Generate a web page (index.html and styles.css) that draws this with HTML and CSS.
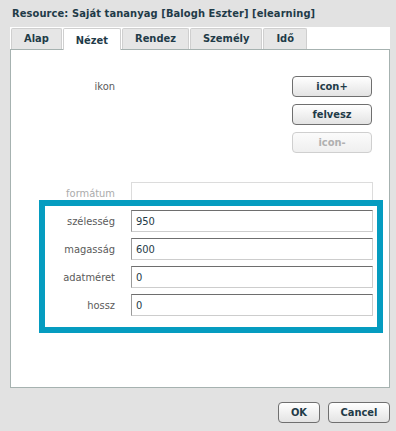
FILE: index.html
```html
<!DOCTYPE html>
<html lang="hu">
<head>
  <meta charset="utf-8">
  <title>Resource</title>
  <link rel="stylesheet" href="styles.css">
</head>
<body>
  <div class="dialog">
    <div class="dialog__title">Resource: Saját tananyag [Balogh Eszter] [elearning]</div>

    <ul class="tabs">
      <li class="tabs__item">Alap</li>
      <li class="tabs__item tabs__item--active">Nézet</li>
      <li class="tabs__item">Rendez</li>
      <li class="tabs__item">Személy</li>
      <li class="tabs__item">Idő</li>
    </ul>

    <div class="panel">
      <div class="row row--top">
        <span class="row__label">ikon</span>
        <div class="row__buttons">
          <button class="btn btn--wide">icon+</button>
          <button class="btn btn--wide">felvesz</button>
          <button class="btn btn--wide" disabled>icon-</button>
        </div>
      </div>

      <div class="row row--disabled">
        <span class="row__label">formátum</span>
        <input class="field" type="text" disabled>
      </div>
      <div class="row">
        <span class="row__label">szélesség</span>
        <input class="field" type="text" value="950">
      </div>
      <div class="row">
        <span class="row__label">magasság</span>
        <input class="field" type="text" value="600">
      </div>
      <div class="row">
        <span class="row__label">adatméret</span>
        <input class="field" type="text" value="0">
      </div>
      <div class="row">
        <span class="row__label">hossz</span>
        <input class="field" type="text" value="0">
      </div>

      <!-- kiemelés a képernyőképen -->
      <div class="highlight"></div>
    </div>

    <div class="dialog__footer">
      <button class="btn btn--ok">OK</button>
      <button class="btn btn--cancel">Cancel</button>
    </div>
  </div>
</body>
</html>
```

FILE: styles.css
```css
*, *::before, *::after {
  box-sizing: border-box;
}

html {
  font-size: 11px;
}

body {
  margin: 0;
  background-color: #e2e2e2;
  font-family: "DejaVu Sans Condensed", "DejaVu Sans", sans-serif;
  color: #1f3b48;
}

ul, li {
  list-style: none;
  margin: 0;
  padding: 0;
}

.dialog {
  padding: 7px 6px 0 10px;
}

.dialog__title {
  height: 14px;
  line-height: 14px;
  padding-left: 2px;
  font-weight: bold;
  font-size: 11px;
  letter-spacing: 0.1px;
}

.tabs {
  display: flex;
  align-items: flex-end;
  height: 22px;
  margin-top: 6px;
  padding-left: 1px;
  gap: 1px;
  background: #ffffff;
}

.tabs__item {
  height: 21px;
  padding: 0 12px;
  line-height: 19px;
  border: 1px solid #cfcfcf;
  border-bottom: none;
  border-radius: 2px 2px 0 0;
  background: #e6e6e6;
  font-weight: bold;
}

.tabs__item--active {
  position: relative;
  z-index: 1;
  height: 22px;
  margin-bottom: -1px;
  line-height: 23px;
  background: #ffffff;
}

.panel {
  position: relative;
  display: flex;
  flex-direction: column;
  gap: 6px;
  height: 339px;
  padding: 26px 16px 0 0;
  border: 1px solid #a6b2b0;
  background: #ffffff;
}

.row {
  display: grid;
  grid-template-columns: 104px 1fr;
  align-items: center;
  column-gap: 16px;
}

.row--top {
  align-items: start;
  margin-bottom: 23px;
}

.row--top .row__label {
  padding-top: 4px;
}

.row__label {
  text-align: right;
  color: #5a5a5a;
}

.row--disabled .row__label {
  color: #ababab;
}

.row__buttons {
  display: flex;
  flex-direction: column;
  align-items: flex-end;
  gap: 7px;
  padding-right: 1px;
}

.field {
  height: 22px;
  padding: 0 4px;
  border: 1px solid #cdcdcd;
  border-top-color: #6e6e6e;
  border-left-color: #9a9a9a;
  font-family: inherit;
  font-size: 11px;
  color: #1f3b48;
}

.field:disabled {
  border-color: #dcdcdc;
  background: #ffffff;
}

.btn {
  height: 21px;
  padding: 0 8px;
  border: 1px solid #6f6f6f;
  border-radius: 4px;
  background: linear-gradient(#ffffff, #e3e3e3);
  font-family: inherit;
  font-size: 11px;
  font-weight: bold;
  color: #1f3b48;
}

.btn:disabled {
  border-color: #cfcfcf;
  background: linear-gradient(#fbfbfb, #efefef);
  color: #b0b0b0;
}

.btn--wide {
  width: 80px;
}

.btn--ok {
  width: 42px;
}

.btn--cancel {
  width: 62px;
}

.highlight {
  position: absolute;
  top: 150px;
  left: 28px;
  width: 344px;
  height: 133px;
  border: 6px solid #059cc0;
  pointer-events: none;
}

.dialog__footer {
  display: flex;
  justify-content: flex-end;
  gap: 8px;
  margin-top: 14px;
}
```
